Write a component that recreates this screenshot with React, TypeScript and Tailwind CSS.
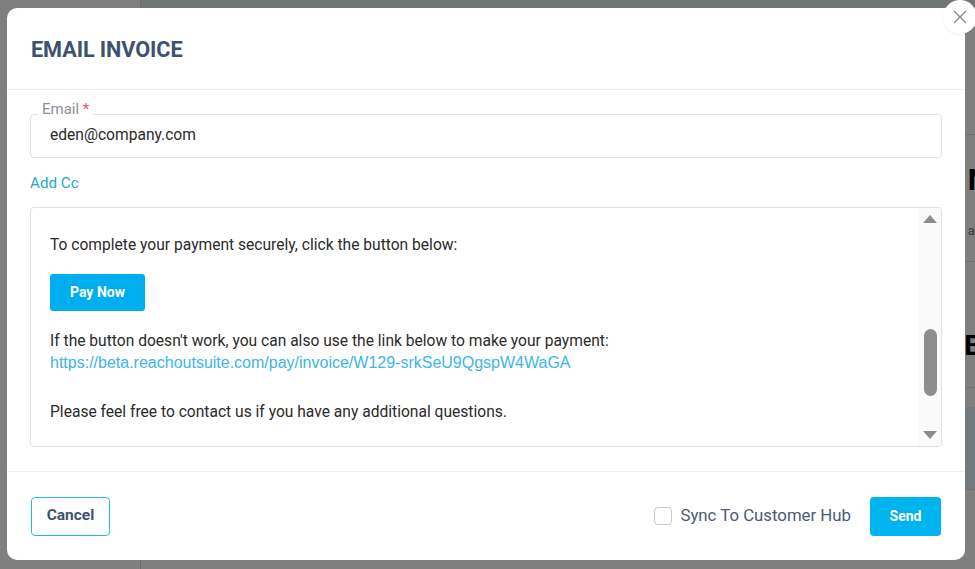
import React from "react";

export default function App() {
  return (
    <div className="relative w-[975px] h-[569px] overflow-hidden bg-[#7f7f7f]" style={{ fontFamily: "Roboto, 'Liberation Sans', sans-serif" }}>
      {/* underlying page (dimmed) */}
      <div className="flex h-full">
        <div className="w-[141px] border-r border-[#6e6e6e] bg-[#7f7f7f]" />
        <div className="flex-1 flex flex-col">
          <div className="h-[8px] bg-[#717575]" />
          <div className="h-[127px] border-b border-[#6f6f6f]" />
          <div className="h-[60px] flex justify-end items-end overflow-hidden">
            <span className="text-[30px] font-bold text-black leading-none mr-[-14px]">N</span>
          </div>
          <div className="h-[45px] flex justify-end items-end overflow-hidden">
            <span className="text-[13px] text-[#3a3a3a] mr-[-4px]">at</span>
          </div>
          <div className="h-[22px] border-b border-[#6f6f6f]" />
          <div className="h-[126px] border-b border-[#6f6f6f] flex justify-end items-end overflow-hidden pb-[27px]">
            <span className="text-[28px] font-bold text-black leading-none mr-[-7px]">B</span>
          </div>
          <div className="h-[19px]" />
          <div className="h-[83px] bg-[#737a7e] border-b border-[#6f6f6f]" />
        </div>
      </div>

      {/* modal */}
      <div className="absolute left-[7px] top-[8px] w-[958px] h-[552px] bg-white rounded-[10px] flex flex-col">
        <div className="h-[82px] flex items-center px-[24px] pt-[3px] border-b border-[#eeeff1]">
          <h1 className="text-[21.7px] font-bold text-[#3d5270] tracking-[-0.1px]">EMAIL INVOICE</h1>
        </div>

        <div className="flex-1 px-[23px] pt-[24px] pb-[24px] border-b border-[#eeeff1] flex flex-col">
          <div className="relative">
            <div className="h-[44px] border border-[#dde1e8] rounded-[4px] flex items-center px-[19px] text-[15.6px] text-[#2b2b2b]">
              eden@company.com
            </div>
            <div className="absolute left-[8px] top-[-14px] bg-white px-[4px] text-[15px] text-[#8a8f97] leading-[18px]">
              Email <span className="text-[#e25563]">*</span>
            </div>
          </div>

          <div className="mt-[16px] text-[15.2px] text-[#1ea8c6] leading-[18px]">Add Cc</div>

          <div className="mt-[15px] h-[240px] border border-[#dde1e8] rounded-[4px] flex overflow-hidden">
            <div className="flex-1 pl-[19px] pt-[27px] text-[15.6px] text-[#2b2b2b]">
              <p className="leading-[21px]">To complete your payment securely, click the button below:</p>
              <div className="mt-[18px]">
                <span className="inline-flex items-center justify-center w-[95px] h-[37px] rounded-[3px] bg-[#00aeef] text-white text-[14px] font-bold">Pay Now</span>
              </div>
              <p className="mt-[20px] leading-[21px]">If the button doesn't work, you can also use the link below to make your payment:</p>
              <p className="leading-[21px] text-[#3cb5ec] text-[16px]" style={{ fontFamily: "'Liberation Sans', Arial, sans-serif" }}>https://beta.reachoutsuite.com/pay/invoice/W129-srkSeU9QgspW4WaGA</p>
              <p className="mt-[29px] leading-[21px]">Please feel free to contact us if you have any additional questions.</p>
            </div>
            <div className="w-[22px] bg-[#fafafa] flex flex-col items-center justify-between py-[7px]">
              <div className="w-0 h-0 border-l-[7px] border-r-[7px] border-b-[8px] border-l-transparent border-r-transparent border-b-[#8c8c8c]" />
              <div className="flex-1 flex flex-col justify-start pt-[106px]">
                <div className="w-[13px] h-[67px] rounded-full bg-[#8e8e8e]" />
              </div>
              <div className="w-0 h-0 border-l-[7px] border-r-[7px] border-t-[8px] border-l-transparent border-r-transparent border-t-[#8c8c8c]" />
            </div>
          </div>
        </div>

        <div className="flex-1 flex items-center justify-between px-[24px]">
          <button className="w-[79px] h-[39px] border border-[#29b6ea] rounded-[4px] text-[15.5px] font-bold text-[#3d5270]">Cancel</button>
          <div className="flex items-center">
            <div className="w-[18px] h-[18px] border border-[#c7cbd2] rounded-[4px] mr-[8px]" />
            <span className="text-[16.8px] text-[#4a5b73]">Sync To Customer Hub</span>
            <button className="ml-[19px] w-[71px] h-[39px] rounded-[4px] bg-[#00b4f0] text-white text-[14px] font-bold">Send</button>
          </div>
        </div>
      </div>

      {/* close button */}
      <div className="absolute left-[943px] top-[0px] w-[34px] h-[34px] rounded-full bg-white flex items-center justify-center shadow-[0_1px_2px_rgba(0,0,0,0.08)]">
        <svg width="14" height="14" viewBox="0 0 14 14" fill="none" stroke="#8a8a8a" strokeWidth="1.4">
          <path d="M1 1 L13 13 M13 1 L1 13" />
        </svg>
      </div>
    </div>
  );
}
